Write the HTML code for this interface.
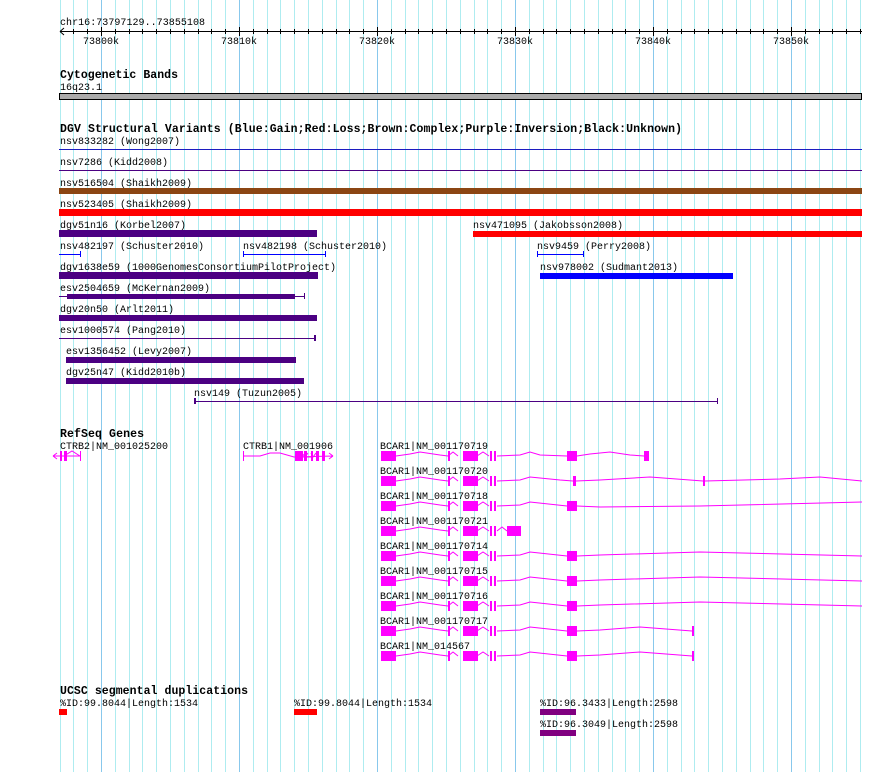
<!DOCTYPE html>
<html><head><meta charset="utf-8"><style>
html,body{margin:0;padding:0;background:#fff;}
svg{display:block;}
text{font-family:"Liberation Mono",monospace;font-size:10px;fill:#000;}
.b{font-weight:bold;font-size:11.5px;}
</style></head><body>
<svg width="890" height="772" xmlns="http://www.w3.org/2000/svg">
<path stroke="#aeecf0" stroke-width="1" d="M60.5 0V772M73.5 0V772M87.5 0V772M115.5 0V772M129.5 0V772M142.5 0V772M156.5 0V772M170.5 0V772M184.5 0V772M198.5 0V772M211.5 0V772M225.5 0V772M253.5 0V772M267.5 0V772M280.5 0V772M294.5 0V772M308.5 0V772M322.5 0V772M336.5 0V772M349.5 0V772M363.5 0V772M391.5 0V772M405.5 0V772M418.5 0V772M432.5 0V772M446.5 0V772M460.5 0V772M474.5 0V772M487.5 0V772M501.5 0V772M529.5 0V772M543.5 0V772M556.5 0V772M570.5 0V772M584.5 0V772M598.5 0V772M612.5 0V772M625.5 0V772M639.5 0V772M667.5 0V772M681.5 0V772M694.5 0V772M708.5 0V772M722.5 0V772M736.5 0V772M750.5 0V772M763.5 0V772M777.5 0V772M805.5 0V772M819.5 0V772M832.5 0V772M846.5 0V772M860.5 0V772"/>
<path stroke="#88c8ec" stroke-width="1" d="M101.5 0V772M239.5 0V772M377.5 0V772M515.5 0V772M653.5 0V772M791.5 0V772"/>

<!-- ruler -->
<text x="60" y="25" textLength="145">chr16:73797129..73855108</text>
<line x1="60" y1="31.5" x2="862" y2="31.5" stroke="#000"/>
<path d="M60 31.5 L64 28 M60 31.5 L64 35" stroke="#000" fill="none"/>
<g stroke="#000">
<path d="M73.5 29v5M87.5 29v5M115.5 29v5M129.5 29v5M142.5 29v5M156.5 29v5M170.5 29v5M184.5 29v5M198.5 29v5M211.5 29v5M225.5 29v5M253.5 29v5M267.5 29v5M280.5 29v5M294.5 29v5M308.5 29v5M322.5 29v5M336.5 29v5M349.5 29v5M363.5 29v5M391.5 29v5M405.5 29v5M418.5 29v5M432.5 29v5M446.5 29v5M460.5 29v5M474.5 29v5M487.5 29v5M501.5 29v5M529.5 29v5M543.5 29v5M556.5 29v5M570.5 29v5M584.5 29v5M598.5 29v5M612.5 29v5M625.5 29v5M639.5 29v5M667.5 29v5M681.5 29v5M694.5 29v5M708.5 29v5M722.5 29v5M736.5 29v5M750.5 29v5M763.5 29v5M777.5 29v5M805.5 29v5M819.5 29v5M832.5 29v5M846.5 29v5M860.5 29v5"/>
<path d="M101.5 27v9M239.5 27v9M377.5 27v9M515.5 27v9M653.5 27v9M791.5 27v9"/>
</g>
<text x="83" y="44">73800k</text><text x="221" y="44">73810k</text><text x="359" y="44">73820k</text><text x="497" y="44">73830k</text><text x="635" y="44">73840k</text><text x="773" y="44">73850k</text>

<!-- cyto -->
<text class="b" x="60" y="78" textLength="118">Cytogenetic Bands</text>
<text x="60" y="90">16q23.1</text>
<rect x="59.5" y="93.5" width="802" height="6" fill="#aaa" stroke="#000"/>

<!-- DGV -->
<text class="b" x="60" y="132" textLength="622">DGV Structural Variants (Blue:Gain;Red:Loss;Brown:Complex;Purple:Inversion;Black:Unknown)</text>
<text x="60" y="144">nsv833282 (Wong2007)</text>
<rect x="59" y="149" width="803" height="1" fill="#1c1cc0"/>
<text x="60" y="165">nsv7286 (Kidd2008)</text>
<rect x="59" y="170" width="803" height="1" fill="#4b0082"/>
<text x="60" y="186">nsv516504 (Shaikh2009)</text>
<rect x="59" y="188" width="803" height="6" fill="#8b4513"/>
<text x="60" y="207">nsv523405 (Shaikh2009)</text>
<rect x="59" y="209" width="803" height="7" fill="#f00"/>
<text x="60" y="228">dgv51n16 (Korbel2007)</text>
<rect x="59" y="230" width="258" height="7" fill="#4b0082"/>
<text x="473" y="228">nsv471095 (Jakobsson2008)</text>
<rect x="473" y="231" width="389" height="6" fill="#f00"/>
<text x="60" y="249">nsv482197 (Schuster2010)</text>
<rect x="59" y="254" width="22" height="1" fill="#00f"/><rect x="80" y="251" width="1" height="6" fill="#00f"/>
<text x="243" y="249">nsv482198 (Schuster2010)</text>
<rect x="243" y="254" width="83" height="1" fill="#00f"/><rect x="243" y="251" width="1" height="6" fill="#00f"/><rect x="325" y="251" width="1" height="6" fill="#00f"/>
<text x="537" y="249">nsv9459 (Perry2008)</text>
<rect x="537" y="254" width="47" height="1" fill="#00f"/><rect x="537" y="251" width="1" height="6" fill="#00f"/><rect x="583" y="251" width="1" height="6" fill="#00f"/>
<text x="60" y="270">dgv1638e59 (1000GenomesConsortiumPilotProject)</text>
<rect x="59" y="272" width="259" height="7" fill="#4b0082"/>
<text x="540" y="270">nsv978002 (Sudmant2013)</text>
<rect x="540" y="273" width="193" height="6" fill="#00f"/>
<text x="60" y="291">esv2504659 (McKernan2009)</text>
<rect x="59" y="296" width="246" height="1" fill="#4b0082"/><rect x="67" y="294" width="228" height="5" fill="#4b0082"/><rect x="304" y="293" width="1" height="6" fill="#4b0082"/>
<text x="60" y="312">dgv20n50 (Arlt2011)</text>
<rect x="59" y="315" width="258" height="6" fill="#4b0082"/>
<text x="60" y="333">esv1000574 (Pang2010)</text>
<rect x="59" y="338" width="256" height="1" fill="#4b0082"/><rect x="314" y="335" width="2" height="6" fill="#4b0082"/>
<text x="66" y="354">esv1356452 (Levy2007)</text>
<rect x="66" y="357" width="230" height="6" fill="#4b0082"/>
<text x="66" y="375">dgv25n47 (Kidd2010b)</text>
<rect x="66" y="378" width="238" height="6" fill="#4b0082"/>
<text x="194" y="396">nsv149 (Tuzun2005)</text>
<rect x="194" y="401" width="524" height="1" fill="#4b0082"/><rect x="194" y="398" width="2" height="6" fill="#4b0082"/><rect x="717" y="398" width="1" height="6" fill="#4b0082"/>

<!-- RefSeq -->
<text class="b" x="60" y="437" textLength="84">RefSeq Genes</text>
<g fill="#f0f" stroke="#f0f">
<text x="60" y="449" style="fill:#000;stroke:none">CTRB2|NM_001025200</text>
<path d="M53 456 L80 456 M53 456 L57 453 M53 456 L57 459 M64 456 L72 451 L80 456" fill="none"/>
<rect x="60" y="451" width="2" height="10" stroke="none"/><rect x="64" y="451" width="3" height="10" stroke="none"/><rect x="80" y="451" width="1" height="10" stroke="none"/>
<text x="243" y="449" style="fill:#000;stroke:none">CTRB1|NM_001906</text>
<path d="M244 456 L260 456 L270 453 L280 453 L294 457 L333 456 M333 456 L329 453 M333 456 L329 459 M302 453 L305 457 L308 453 M311 453 L313 457 L316 453" fill="none"/>
<rect x="243" y="451" width="1" height="10" stroke="none"/><rect x="295" y="451" width="8" height="10" stroke="none"/><rect x="304" y="451" width="3" height="10" stroke="none"/><rect x="311" y="451" width="2" height="10" stroke="none"/><rect x="316" y="451" width="3" height="10" stroke="none"/><rect x="322" y="451" width="3" height="10" stroke="none"/>
</g>

<g fill="#f0f">
<g transform="translate(0,0)">
<text x="380" y="449" style="fill:#000">BCAR1|NM_001170719</text>
<path d="M396 456 L410 454 L420 452 L440 455 L448 456 M448 456 L453 452 L458 456 M477 456 L483 452 L489 456 M497 456 L520 455 L530 452 L540 455 L567 456 M577 456 L590 454 L610 452 L630 455 L644 456" stroke="#f0f" fill="none"/>
<rect x="381" y="451" width="15" height="10"/><rect x="448" y="451" width="2" height="10"/><rect x="463" y="451" width="15" height="10"/><rect x="490" y="451" width="2" height="10"/><rect x="494" y="451" width="2" height="10"/><rect x="567" y="451" width="10" height="10"/><rect x="644" y="451" width="5" height="10"/>
</g>
<g transform="translate(0,25)">
<text x="380" y="449" style="fill:#000">BCAR1|NM_001170720</text>
<path d="M396 456 L410 454 L420 452 L440 455 L448 456 M448 456 L453 452 L458 456 M477 456 L483 452 L489 456 M497 456 L520 455 L530 452 L560 455 L573 456 M576 456 L600 455 L650 452 L703 456 M705 456 L780 454 L820 452 L862 456" stroke="#f0f" fill="none"/>
<rect x="381" y="451" width="15" height="10"/><rect x="448" y="451" width="2" height="10"/><rect x="463" y="451" width="15" height="10"/><rect x="490" y="451" width="2" height="10"/><rect x="494" y="451" width="2" height="10"/><rect x="573" y="451" width="3" height="10"/><rect x="703" y="451" width="2" height="10"/>
</g>
<g transform="translate(0,50)">
<text x="380" y="449" style="fill:#000">BCAR1|NM_001170718</text>
<path d="M396 456 L410 454 L420 452 L440 455 L448 456 M448 456 L453 452 L458 456 M477 456 L483 452 L489 456 M497 456 L520 455 L530 452 L567 456 M577 456 L600 457 L700 456 L862 452" stroke="#f0f" fill="none"/>
<rect x="381" y="451" width="15" height="10"/><rect x="448" y="451" width="2" height="10"/><rect x="463" y="451" width="15" height="10"/><rect x="490" y="451" width="2" height="10"/><rect x="494" y="451" width="2" height="10"/><rect x="567" y="451" width="10" height="10"/>
</g>
<g transform="translate(0,75)">
<text x="380" y="449" style="fill:#000">BCAR1|NM_001170721</text>
<path d="M396 456 L410 454 L420 452 L440 455 L448 456 M448 456 L453 452 L458 456 M477 456 L483 452 L489 456 M497 456 L502 452 L507 456" stroke="#f0f" fill="none"/>
<rect x="381" y="451" width="15" height="10"/><rect x="448" y="451" width="2" height="10"/><rect x="463" y="451" width="15" height="10"/><rect x="490" y="451" width="2" height="10"/><rect x="494" y="451" width="2" height="10"/><rect x="507" y="451" width="14" height="10"/>
</g>
<g transform="translate(0,100)">
<text x="380" y="449" style="fill:#000">BCAR1|NM_001170714</text>
<path d="M396 456 L410 454 L420 452 L440 455 L448 456 M448 456 L453 452 L458 456 M477 456 L483 452 L489 456 M497 456 L520 455 L530 452 L567 456 M577 456 L600 455 L700 452 L862 456" stroke="#f0f" fill="none"/>
<rect x="381" y="451" width="15" height="10"/><rect x="448" y="451" width="2" height="10"/><rect x="463" y="451" width="15" height="10"/><rect x="490" y="451" width="2" height="10"/><rect x="494" y="451" width="2" height="10"/><rect x="567" y="451" width="10" height="10"/>
</g>
<g transform="translate(0,125)">
<text x="380" y="449" style="fill:#000">BCAR1|NM_001170715</text>
<path d="M396 456 L410 454 L420 452 L440 455 L448 456 M448 456 L453 452 L458 456 M477 456 L483 452 L489 456 M497 456 L520 455 L530 452 L567 456 M577 456 L600 455 L700 452 L862 456" stroke="#f0f" fill="none"/>
<rect x="381" y="451" width="15" height="10"/><rect x="448" y="451" width="2" height="10"/><rect x="463" y="451" width="15" height="10"/><rect x="490" y="451" width="2" height="10"/><rect x="494" y="451" width="2" height="10"/><rect x="567" y="451" width="10" height="10"/>
</g>
<g transform="translate(0,150)">
<text x="380" y="449" style="fill:#000">BCAR1|NM_001170716</text>
<path d="M396 456 L410 454 L420 452 L440 455 L448 456 M448 456 L453 452 L458 456 M477 456 L483 452 L489 456 M497 456 L520 455 L530 452 L567 456 M577 456 L600 455 L700 452 L862 456" stroke="#f0f" fill="none"/>
<rect x="381" y="451" width="15" height="10"/><rect x="448" y="451" width="2" height="10"/><rect x="463" y="451" width="15" height="10"/><rect x="490" y="451" width="2" height="10"/><rect x="494" y="451" width="2" height="10"/><rect x="567" y="451" width="10" height="10"/>
</g>
<g transform="translate(0,175)">
<text x="380" y="449" style="fill:#000">BCAR1|NM_001170717</text>
<path d="M396 456 L410 454 L420 452 L440 455 L448 456 M448 456 L453 452 L458 456 M477 456 L483 452 L489 456 M497 456 L520 455 L530 452 L567 456 M577 456 L600 455 L640 452 L692 456" stroke="#f0f" fill="none"/>
<rect x="381" y="451" width="15" height="10"/><rect x="448" y="451" width="2" height="10"/><rect x="463" y="451" width="15" height="10"/><rect x="490" y="451" width="2" height="10"/><rect x="494" y="451" width="2" height="10"/><rect x="567" y="451" width="10" height="10"/><rect x="692" y="451" width="2" height="10"/>
</g>
<g transform="translate(0,200)">
<text x="380" y="449" style="fill:#000">BCAR1|NM_014567</text>
<path d="M396 456 L410 454 L420 452 L440 455 L448 456 M448 456 L453 452 L458 456 M477 456 L483 452 L489 456 M497 456 L520 455 L530 452 L567 456 M577 456 L600 455 L640 452 L692 456" stroke="#f0f" fill="none"/>
<rect x="381" y="451" width="15" height="10"/><rect x="448" y="451" width="2" height="10"/><rect x="463" y="451" width="15" height="10"/><rect x="490" y="451" width="2" height="10"/><rect x="494" y="451" width="2" height="10"/><rect x="567" y="451" width="10" height="10"/><rect x="692" y="451" width="2" height="10"/>
</g>
</g>

<!-- segdups -->
<text class="b" x="60" y="694" textLength="188">UCSC segmental duplications</text>
<text x="60" y="706">%ID:99.8044|Length:1534</text>
<rect x="59" y="709" width="8" height="6" fill="#f00"/>
<text x="294" y="706">%ID:99.8044|Length:1534</text>
<rect x="294" y="709" width="23" height="6" fill="#f00"/>
<text x="540" y="706">%ID:96.3433|Length:2598</text>
<rect x="540" y="709" width="36" height="6" fill="#800080"/>
<text x="540" y="727">%ID:96.3049|Length:2598</text>
<rect x="540" y="730" width="36" height="6" fill="#800080"/>
</svg>
</body></html>
